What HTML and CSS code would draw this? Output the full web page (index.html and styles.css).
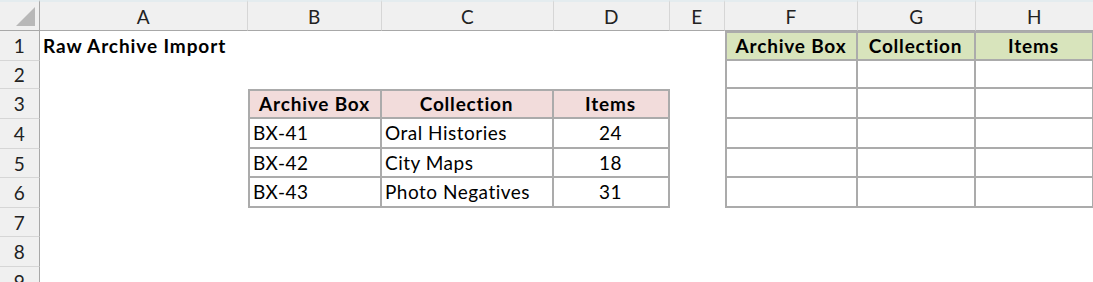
FILE: index.html
```html
<!DOCTYPE html>
<html>
<head>
<meta charset="utf-8">
<link rel="stylesheet" href="styles.css">
</head>
<body>
<div class="sheet">
  <div class="corner"><span class="tri"></span></div>
  <div class="ch">A</div><div class="ch">B</div><div class="ch">C</div><div class="ch">D</div><div class="ch">E</div><div class="ch">F</div><div class="ch">G</div><div class="ch">H</div>

  <div class="rh">1</div>
  <div class="c bold">Raw Archive Import</div><div class="c"></div><div class="c"></div><div class="c"></div><div class="c"></div>
  <div class="c g hd bl bt">Archive Box</div><div class="c g hd bt">Collection</div><div class="c g hd bt">Items</div>

  <div class="rh">2</div>
  <div class="c"></div><div class="c"></div><div class="c"></div><div class="c"></div><div class="c"></div>
  <div class="c bx bl"></div><div class="c bx"></div><div class="c bx"></div>

  <div class="rh">3</div>
  <div class="c"></div>
  <div class="c p hd bl bt">Archive Box</div><div class="c p hd bt">Collection</div><div class="c p hd bt">Items</div>
  <div class="c"></div>
  <div class="c bx bl"></div><div class="c bx"></div><div class="c bx"></div>

  <div class="rh">4</div>
  <div class="c"></div>
  <div class="c bx bl">BX-41</div><div class="c bx">Oral Histories</div><div class="c bx num">24</div>
  <div class="c"></div>
  <div class="c bx bl"></div><div class="c bx"></div><div class="c bx"></div>

  <div class="rh">5</div>
  <div class="c"></div>
  <div class="c bx bl">BX-42</div><div class="c bx">City Maps</div><div class="c bx num">18</div>
  <div class="c"></div>
  <div class="c bx bl"></div><div class="c bx"></div><div class="c bx"></div>

  <div class="rh">6</div>
  <div class="c"></div>
  <div class="c bx bl">BX-43</div><div class="c bx">Photo Negatives</div><div class="c bx num">31</div>
  <div class="c"></div>
  <div class="c bx bl"></div><div class="c bx"></div><div class="c bx"></div>

  <div class="rh">7</div>
  <div class="c"></div><div class="c"></div><div class="c"></div><div class="c"></div><div class="c"></div><div class="c"></div><div class="c"></div><div class="c"></div>

  <div class="rh">8</div>
  <div class="c"></div><div class="c"></div><div class="c"></div><div class="c"></div><div class="c"></div><div class="c"></div><div class="c"></div><div class="c"></div>

  <div class="rh">9</div>
  <div class="c"></div><div class="c"></div><div class="c"></div><div class="c"></div><div class="c"></div><div class="c"></div><div class="c"></div><div class="c"></div>
</div>
</body>
</html>
```

FILE: styles.css
```css
html, body {
  margin: 0;
  padding: 0;
  background: #ffffff;
  overflow: hidden;
}

.sheet {
  display: grid;
  grid-template-columns: 40px 208px 134px 172px 116px 55px 133px 118px 118px;
  grid-template-rows: 31px 30px 28px 30px 30px 29px 30px 29px 30px 30px;
  font-family: Lato, "Open Sans", sans-serif;
  font-size: 19px;
  letter-spacing: 0.5px;
  color: #000;
}

.sheet > div {
  box-sizing: border-box;
  white-space: nowrap;
  overflow: visible;
}

.corner {
  background: #f0f0f0;
  border-top: 2px solid #e4ecef;
  border-right: 1px solid #a8a8a8;
  border-bottom: 1px solid #a8a8a8;
  position: relative;
}

.tri {
  position: absolute;
  right: 4px;
  bottom: 4px;
  width: 0;
  height: 0;
  border-left: 19px solid transparent;
  border-bottom: 19px solid #b8b8b8;
}

.ch {
  background: #f0f0f0;
  border-top: 2px solid #e4ecef;
  border-right: 1px solid #d6d6d6;
  border-bottom: 1px solid #a8a8a8;
  display: flex;
  align-items: center;
  justify-content: center;
  color: #222;
}

.rh {
  background: #f0f0f0;
  border-right: 1px solid #a8a8a8;
  border-bottom: 1px solid #d6d6d6;
  display: flex;
  align-items: center;
  justify-content: center;
  color: #222;
}

.c {
  display: flex;
  align-items: center;
  padding: 0 4px 1px 3px;
}

.bold {
  font-weight: 700;
  letter-spacing: 0.9px;
}

.bx, .hd {
  border-right: 2px solid #ababab;
  border-bottom: 2px solid #ababab;
}

.bl {
  border-left: 2px solid #ababab;
}

.bt {
  border-top: 2px solid #ababab;
}

.hd {
  font-weight: 700;
  letter-spacing: 0.8px;
  justify-content: center;
}

.p {
  background: #f2dcdb;
}

.g {
  background: #d8e4bc;
}

.num {
  justify-content: center;
}
```
